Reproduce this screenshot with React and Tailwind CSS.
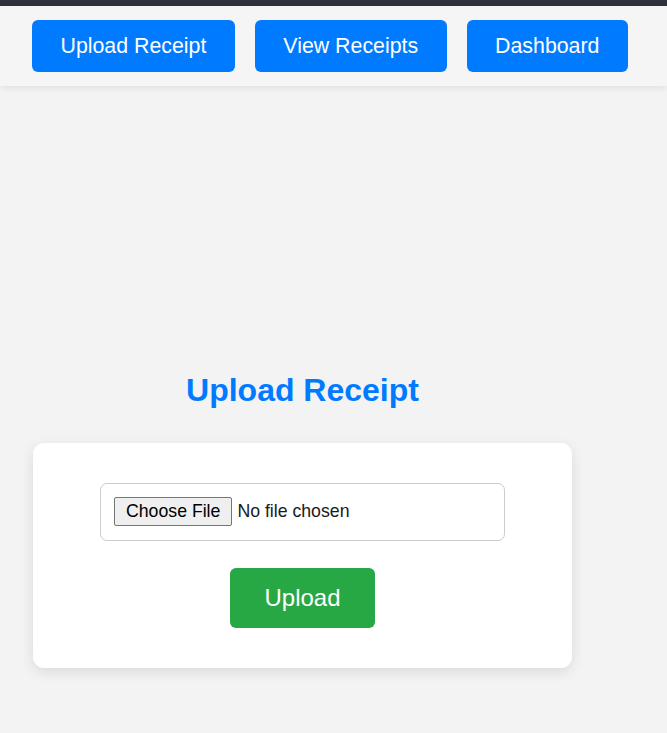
const App = () => {
    return (
        <div className="min-h-screen bg-[#f3f3f3]" style={{ fontFamily: '"Liberation Sans", Arial, sans-serif' }}>
            <div className="h-[6px] bg-[#2d333b]" />
            <nav className="flex gap-[20px] pl-[32px] py-[14px] bg-[#f5f5f5] shadow-[0_2px_6px_rgba(0,0,0,0.08)]">
                <button className="px-[28.5px] py-[13.5px] rounded-[6px] bg-[#007bff] text-white text-[21.33px] leading-[1.15]">Upload Receipt</button>
                <button className="px-[28.5px] py-[13.5px] rounded-[6px] bg-[#007bff] text-white text-[21.33px] leading-[1.15]">View Receipts</button>
                <button className="px-[28.5px] py-[13.5px] rounded-[6px] bg-[#007bff] text-white text-[21.33px] leading-[1.15]">Dashboard</button>
            </nav>
            <div className="ml-[33px] w-[539px] pt-[286px]">
                <h2 className="text-center text-[32px] leading-[37px] font-bold text-[#007bff]">Upload Receipt</h2>
                <div className="mt-[34px] bg-white rounded-[11px] shadow-[0_4px_13px_rgba(0,0,0,0.1)] pt-[40px] pb-[40px] flex flex-col items-center">
                    <div className="w-[405px] h-[58px] border border-[#cccccc] rounded-[7px] px-[13px] flex items-center">
                        <input
                            type="file"
                            className="text-[17.7px] leading-[1.15] text-[#1a1a1a] file:bg-[#efefef] file:border file:border-[#767676] file:rounded-[2px] file:px-[11px] file:py-[3px] file:mr-[5px] file:text-black"
                        />
                    </div>
                    <button className="mt-[27px] px-[34.5px] py-[16.5px] rounded-[6px] bg-[#28a745] text-white text-[24px] leading-[1.15]">Upload</button>
                </div>
            </div>
        </div>
    )
}
export default App
